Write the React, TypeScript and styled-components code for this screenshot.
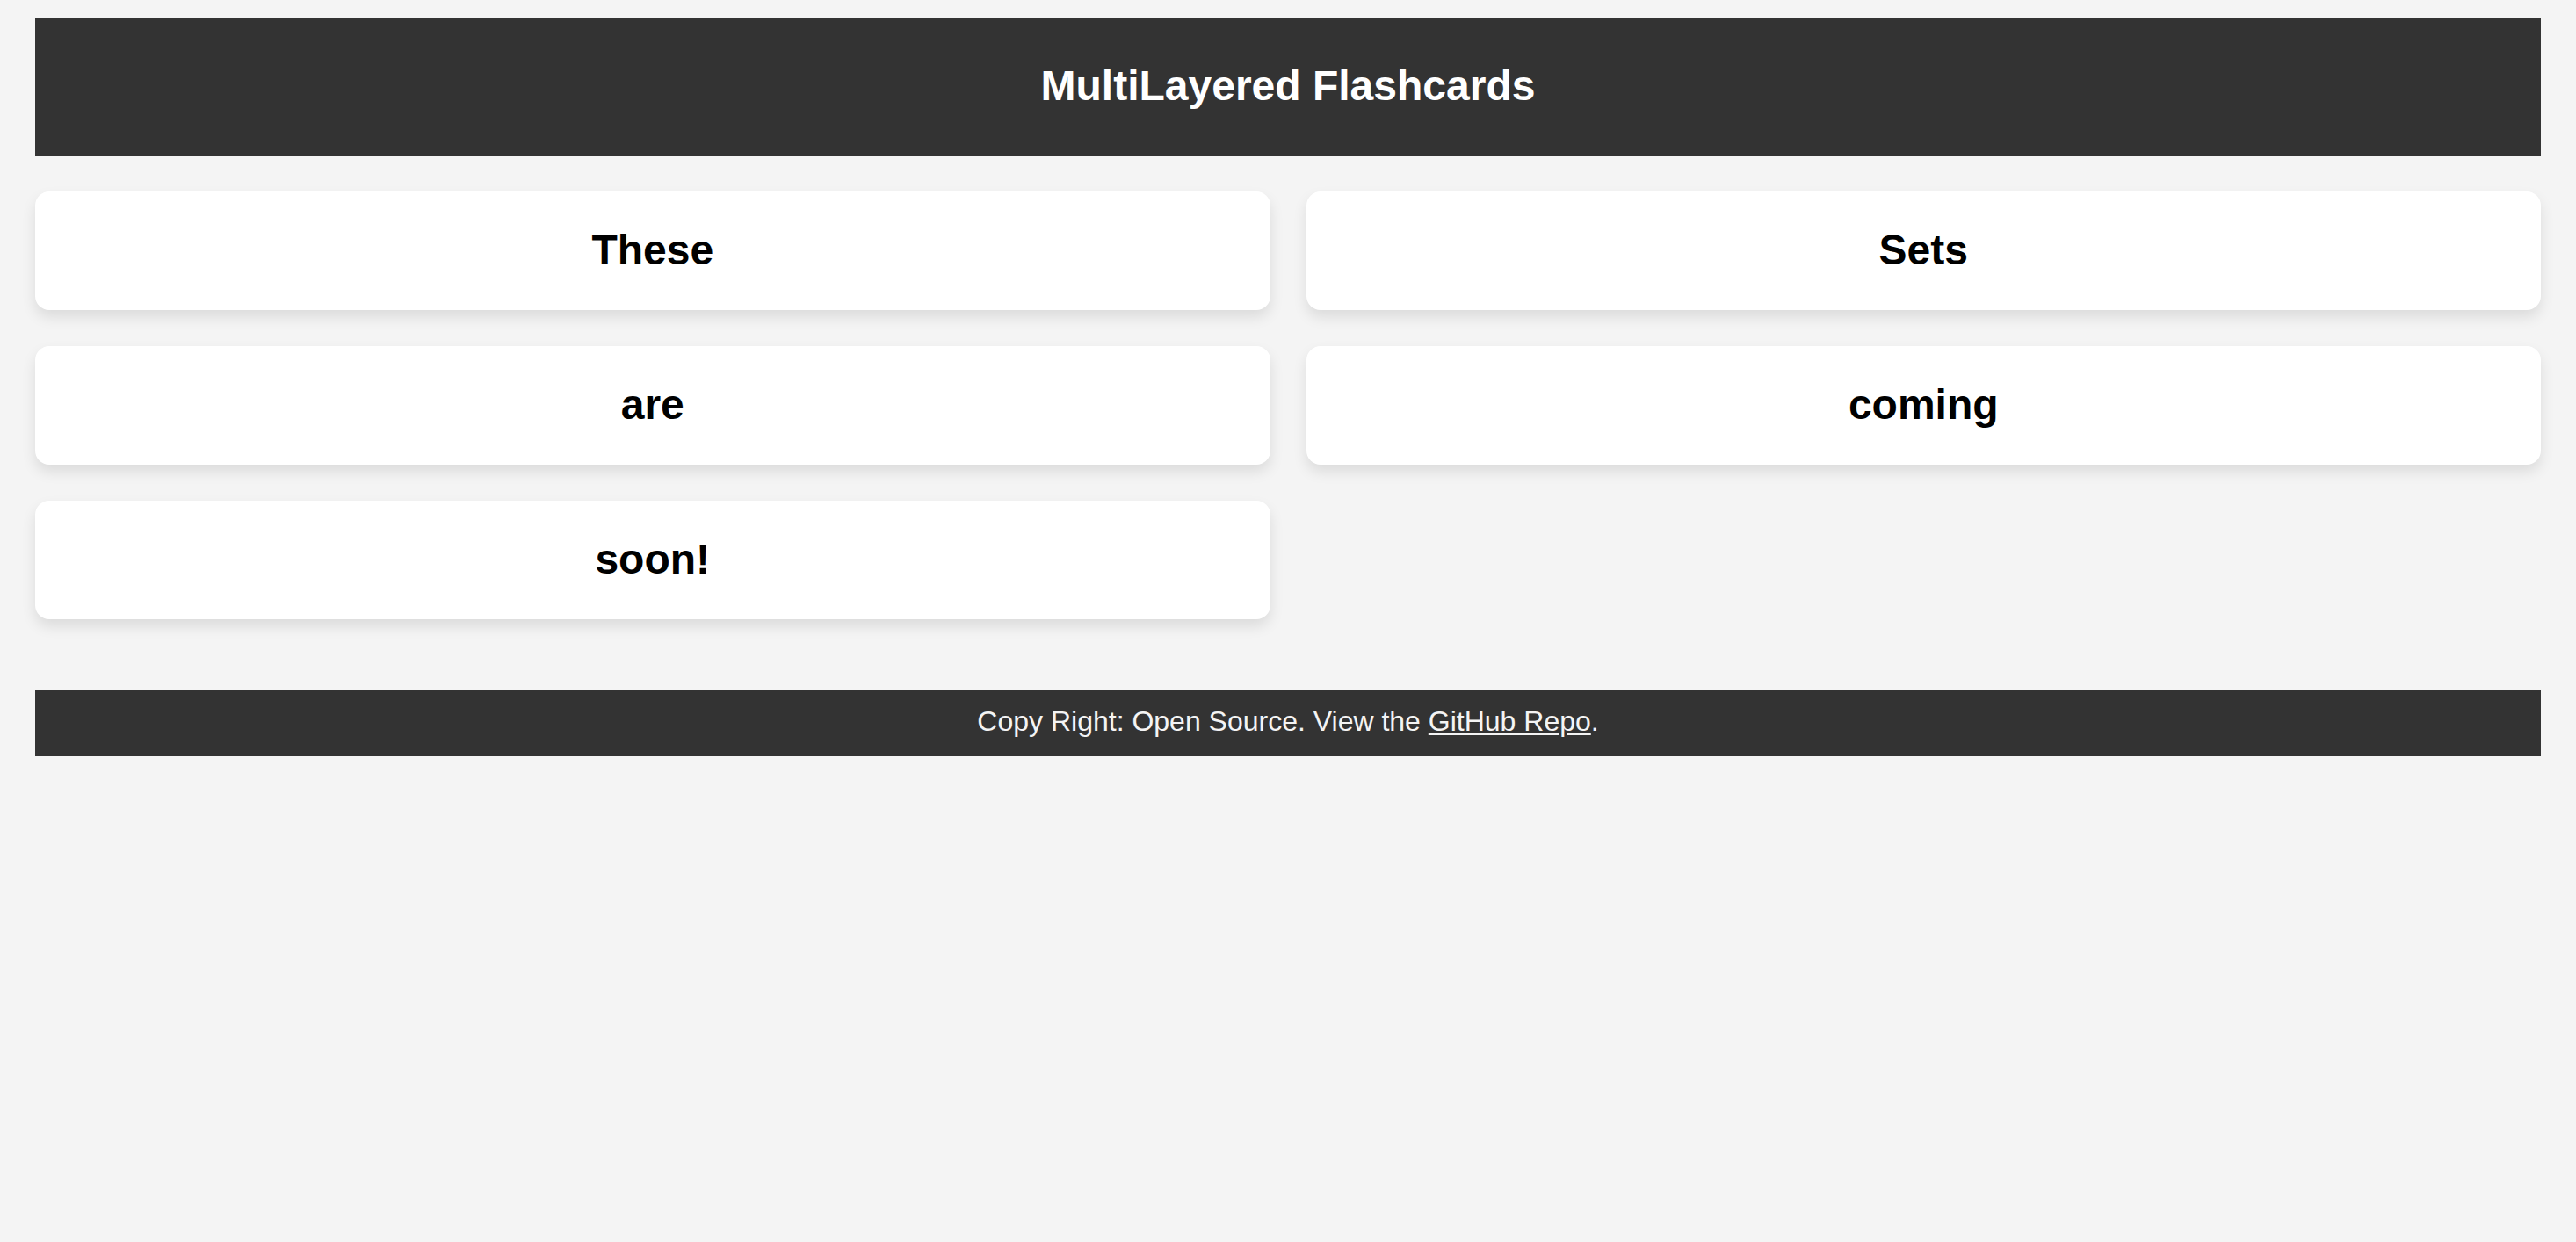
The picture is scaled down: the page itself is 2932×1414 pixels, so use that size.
import React from 'react'
import styled, { createGlobalStyle } from 'styled-components'

const GlobalStyle = createGlobalStyle`
  html, body {
    margin: 0;
    padding: 0;
    background: #f4f4f4;
    font-family: "Liberation Sans", Arial, sans-serif;
  }
`

const Page = styled.div`
  padding: 21px 40px 40px;
  display: flex;
  flex-direction: column;
`

const Header = styled.header`
  background: #333;
  color: #fff;
  height: 157px;
  box-sizing: border-box;
  padding-bottom: 4px;
  display: flex;
  align-items: center;
  justify-content: center;
`

const Title = styled.h1`
  margin: 0;
  font-size: 48px;
  font-weight: bold;
`

const CardGrid = styled.main`
  display: grid;
  grid-template-columns: 1fr 1fr;
  column-gap: 41px;
  row-gap: 41px;
  margin-top: 40px;
`

const Card = styled.div`
  background: #fff;
  border-radius: 16px;
  box-shadow: 0 8px 16px rgba(0, 0, 0, 0.1);
  height: 135px;
  box-sizing: border-box;
  padding-bottom: 3px;
  display: flex;
  align-items: center;
  justify-content: center;
  font-size: 48px;
  font-weight: bold;
  color: #000;
`

const Footer = styled.footer`
  margin-top: 80px;
  background: #333;
  color: #f4f4f4;
  height: 76px;
  box-sizing: border-box;
  padding-bottom: 4px;
  display: flex;
  align-items: center;
  justify-content: center;
  font-size: 32px;
`

const RepoLink = styled.a`
  color: #f4f4f4;
  text-decoration: underline;
`

const words = ['These', 'Sets', 'are', 'coming', 'soon!']

export default function App() {
  return (
    <>
      <GlobalStyle />
      <Page>
        <Header>
          <Title>MultiLayered Flashcards</Title>
        </Header>
        <CardGrid>
          {words.map((w) => (
            <Card key={w}>{w}</Card>
          ))}
        </CardGrid>
        <Footer>
          <span>
            Copy Right: Open Source. View the <RepoLink href="#">GitHub Repo</RepoLink>.
          </span>
        </Footer>
      </Page>
    </>
  )
}
